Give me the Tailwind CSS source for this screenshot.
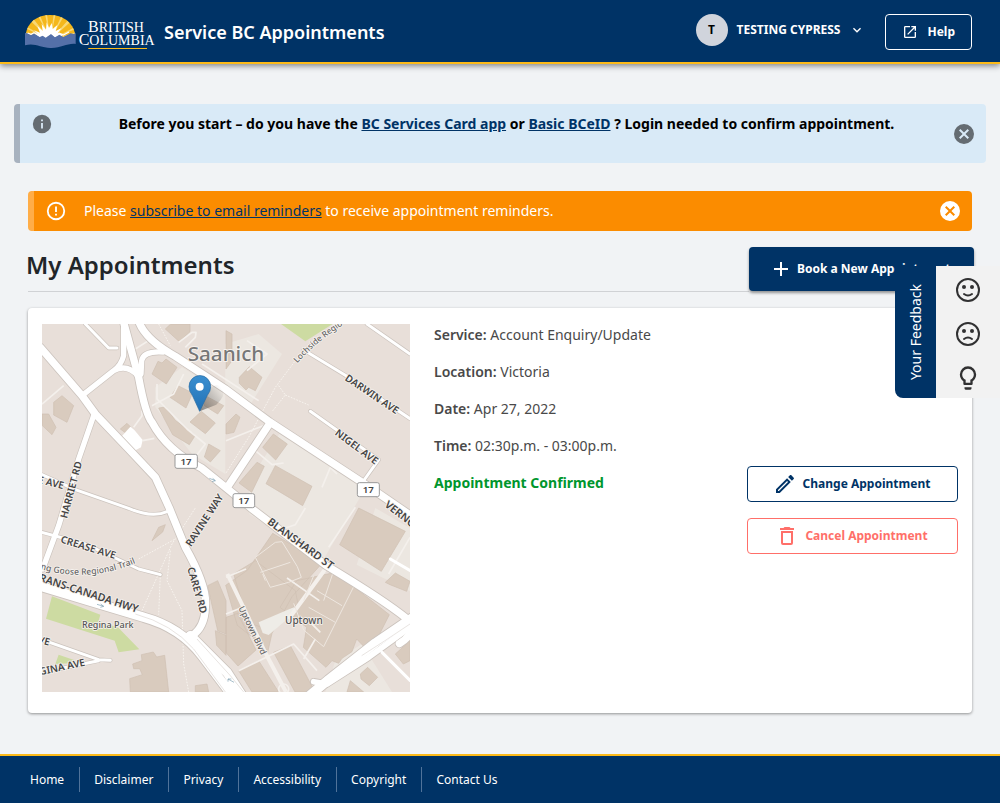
<!DOCTYPE html>
<html lang="en">
<head>
<meta charset="utf-8">
<meta name="viewport" content="width=device-width, initial-scale=1">
<title>Service BC Appointments</title>
<script src="https://cdn.jsdelivr.net/npm/@tailwindcss/browser@4"></script>
</head>
<body class="flex min-h-screen flex-col bg-[#f1f3f5] font-['Noto_Sans',sans-serif] text-sm text-[#494949]">

<header class="relative flex h-16 items-center border-b-2 border-[#fcba19] bg-[#003366] pt-0.5 pr-7 pl-[25px] text-white shadow-[0_2px_6px_rgba(0,0,0,0.45)]">
  <a href="#" class="flex items-center gap-2" aria-label="British Columbia">
    <svg class="h-9 w-[131px] overflow-visible" viewBox="0 0 393 108" aria-hidden="true">
      <clipPath id="dome"><path d="M2 62C7 24 37 3 75 3s69 21 76 59v34H2z"/></clipPath>
      <g clip-path="url(#dome)">
        <path fill="#f4b71c" d="M0 0h156v70H0z"/>
        <path fill="#f9d873" d="M76 78 0 42v-7zM76 78 10 14l8-8zM76 78 36 0h7zM76 78 60 0h6zM76 78 86 0h6zM76 78 112 0h8zM76 78 138 8l7 8zM76 78 156 36v7zM76 78 0 60v-5zM76 78 156 54v5z"/>
        <path fill="#fff" d="m22 62 17-1-12-12 18 7-8-20 16 15-3-21 13 17 2-22 7 17 8-15 3 18 14-12-5 18 17-8-11 15 17 2-8 12H30z"/>
      </g>
      <path fill="#5470a8" d="M0 57 10 58l8 5 9-5 17 11 9-4 9 6 16-11 12 10 13-8 12 7 22-11 9 2 6-3v33c-26-3-42 13-76 12-30-1-46-16-76-8z"/>
      <path fill="none" stroke="#fff" stroke-width="4" d="m8 57 10 4 9-5 17 9 10-4 9 5 15-10 12 10 13-8 12 5 17-9"/>
      <g fill="#fff" font-family="Liberation Serif, serif">
        <text x="189" y="54" font-size="48">B<tspan font-size="42">RITISH</tspan></text>
        <text x="161" y="93" font-size="48">C<tspan font-size="42">OLUMBIA</tspan></text>
      </g>
      <path fill="#fcba19" d="M190 102h176v3H190z"/>
    </svg>
    <span class="text-lg font-semibold whitespace-nowrap">Service BC Appointments</span>
  </a>
  <div class="ml-auto flex items-center gap-5">
    <button type="button" class="flex items-center gap-[9px] pb-1 text-xs font-bold whitespace-nowrap">
      <span class="flex size-8 items-center justify-center rounded-full bg-[#d0d4dc] text-black">T</span>
      <span>TESTING CYPRESS</span>
      <svg class="size-4" viewBox="0 0 24 24" fill="currentColor" aria-hidden="true"><path d="M7.41 8.58 12 13.17l4.59-4.59L18 10l-6 6-6-6z"/></svg>
    </button>
    <button type="button" class="flex h-9 items-center gap-[9px] rounded border border-white px-4 text-xs font-bold">
      <svg class="size-4" viewBox="0 0 24 24" fill="currentColor" aria-hidden="true"><path d="M14 3v2h3.59l-9.83 9.83 1.41 1.41L19 6.41V10h2V3M19 19H5V5h7V3H5c-1.11 0-2 .9-2 2v14a2 2 0 0 0 2 2h14a2 2 0 0 0 2-2v-7h-2z"/></svg>
      <span>Help</span>
    </button>
  </div>
</header>

<main class="flex-1 px-7 pt-10 pb-10">
  <section role="status" class="-mx-3.5 flex h-[59px] items-start rounded border-l-6 border-[#a8b2bf] bg-[#d9eaf7] pr-2.5 text-black">
    <svg class="mt-[9px] ml-[11px] size-[22px] shrink-0 text-[#656c72]" viewBox="0 0 24 24" fill="currentColor" aria-hidden="true"><path d="M13 9h-2V7h2m0 10h-2v-6h2M12 2a10 10 0 1 0 0 20 10 10 0 0 0 0-20z"/></svg>
    <p class="mt-2.5 flex-1 pl-2 text-center font-bold">Before you start – do you have the <a href="#" class="text-[#003366] underline">BC Services Card app</a> or <a href="#" class="text-[#003366] underline">Basic BCeID</a> ? Login needed to confirm appointment.</p>
    <button type="button" aria-label="Close notice" class="self-center text-[#656c72]"><svg class="size-6" viewBox="0 0 24 24" fill="currentColor" fill-rule="evenodd" aria-hidden="true"><path d="M12 2a10 10 0 1 0 0 20 10 10 0 0 0 0-20m3.59 5L12 10.59 8.41 7 7 8.41 10.59 12 7 15.59 8.41 17 12 13.41 15.59 17 17 15.59 13.41 12 17 8.41z"/></svg></button>
  </section>

  <section role="status" class="mt-7 flex h-10 items-center rounded border-l-6 border-[#ffad47] bg-[#fb8c00] pr-2.5 pl-[11px] text-white">
    <svg class="size-[22px] shrink-0" viewBox="0 0 24 24" fill="currentColor" aria-hidden="true"><path d="M11 15h2v2h-2zm0-8h2v6h-2zm1-5a10 10 0 1 0 0 20 10 10 0 0 0 0-20m0 18a8 8 0 1 1 0-16 8 8 0 0 1 0 16z"/></svg>
    <p class="ml-[17px] flex-1">Please <a href="#" class="text-[#003366] underline">subscribe to email reminders</a> to receive appointment reminders.</p>
    <button type="button" aria-label="Close reminder"><svg class="size-6" viewBox="0 0 24 24" fill="currentColor" fill-rule="evenodd" aria-hidden="true"><path d="M12 2a10 10 0 1 0 0 20 10 10 0 0 0 0-20m3.59 5L12 10.59 8.41 7 7 8.41 10.59 12 7 15.59 8.41 17 12 13.41 15.59 17 17 15.59 13.41 12 17 8.41z"/></svg></button>
  </section>

  <div class="mt-4 -mr-0.5 flex items-start justify-between">
    <div class="flex h-[45px] flex-1 border-b border-[#d0d2d5]"><h1 class="-ml-0.5 text-2xl/9 font-semibold text-[#212529]">My Appointments</h1></div>
    <button type="button" class="flex h-11 w-[225px] items-center gap-1 rounded bg-[#003366] pl-5 text-xs font-bold whitespace-nowrap text-white shadow-[0_2px_3px_rgba(0,0,0,0.4)]">
      <svg class="size-6 shrink-0" viewBox="0 0 24 24" fill="currentColor" aria-hidden="true"><path d="M19 13h-6v6h-2v-6H5v-2h6V5h2v6h6z"/></svg>
      <span>Book a New Appointment</span>
    </button>
  </div>

  <article class="mt-4 flex gap-6 rounded bg-white px-3.5 pt-4 pb-[21px] shadow-[0_1px_3px_rgba(0,0,0,0.4)]">
    <svg class="size-[368px] shrink-0" viewBox="0 0 1104 1104" role="img" aria-label="Map of the Victoria office" font-family="Noto Sans, sans-serif">
      <path fill="#e8dfd9" d="M0 0h1104v1104H0z"/>
      <g fill="#ece7e1">
        <path d="M340 190 420 130l130 80v240l-100-60-110-140zM622 470l90-140 260 160-130 220-220-140zM1000 552l104 60v190l-160-80zM550 60 650 30l70 60-100 160-70-40zM880 1010l80-50 90 144H850z"/>
      </g>
      <g fill="#cddba2">
        <path d="M717 0h155l-82 52zM30 817l145 55-5 18 60 22 62 64-62 9-12-35-206-66zM50 992l46 16-12 10-44 2z"/>
      </g>
      <g fill="#d9cbbe" stroke="#cfc0b2" stroke-width="2">
        <path d="m386 0-16 15 42 38 32-30V0zM330 150l18-38 12 5 12-12 33 25-32 50zM408 185l44 22-20 45-48-32zM478 262l42 35-30 32-46-35zM350 252l20-3 30 40 60 45-18 28-50-30zM500 360l35 20-30 34-18-15zM490 215l55 30-18 25-40-25zM235 315l20-17 10 10-10 22zM35 235l25-20 35 30-20 50-40-22zM0 270l20 0 22 40-12 22-30-28zM592 160l30-32 38 32-20 40-20-10-8 8-20-20zM552 20l18 10v80l-18 25zM552 300l30-30 12 10-18 45-24 5zM662 370l32-40 42 30-35 48zM645 415l22 12-38 78-38-28zM700 425l110 62-28 58-110-66zM1020 530l84 40v-10l-60-35z"/>
        <path d="m950 552 140 70-72 120-125-80zM1030 775l30-28 44 25-10 30-50-20zM692 628l148 90-90 100-60 110-16 70-38-54-50-40-35-120 65-45zM575 750l65-40 120 90 8 40-110 70-40-15zM880 745l162 127-58 115-40-42-14 38-30 20-10 15-20-8-18 20-68-60 10-60-80-60 50-80zM552 880l35-12 55 110-54 48-36-40zM590 1040l60-30 60 94h-80zM695 985l50-20 74 139h-60zM330 650l20-40 20-8-8 22zM497 785l30-15 25 60v100l-25-10zM520 920l32 14v60l-28-30zM272 1020l28-10-2-18 36-8 10 15 24-5 12 110H265l-2-40 38-12-8-18-18 0zM460 1085l35-5 5 24h-40zM955 1050l22-20 30 30-25 25-25-20zM1060 990l44-40v60l-20 10zM925 1070l40 34h-50z"/>
      </g>
      <path fill="#eeece7" d="m650 895 105-45 5 15-80 68-18-6z"/>
      <path fill="#fff" d="m240 336 25-28 12 10 25 30-5 22-22 12-15-16z"/>
      <g fill="none" stroke="#f4f0ec" stroke-width="5" stroke-linejoin="round">
        <path d="m410 55 40-30 12 0-2 15-30 30M345 180v45l90 90 55 45-50 65M330 245l65-35 30-60M275 310l25-35V260M302 350l35-7M0 240l65-55M280 75l55-35M480 120 650 230M552 350l150-60M615 50l60 40-60 50M640 380l50 42 35-5M840 490l25-60 20 20M1104 640 1040 750M940 550 860 670M790 552l-30 50-60 20M552 760l60-25M552 870l50-20M735 762 832 830M790 880l45 45M590 1040l165-80 70 80M785 1005l35-60"/>
        <path d="m556 750 116 240 60 114M740 885l110-150" stroke-width="12"/>
        <circle cx="725" cy="1095" r="15"/>
      </g>
      <g fill="none" stroke="#eee7e0" stroke-width="3">
        <path d="m700 655-60 45 45 90 55-15 38-15-12-32-46-75zM655 745l90-30M670 770l-8-20M815 755l-30 75M845 830l30-90 65 38-95 190-60-50-30-80M800 850l80 45M825 800l75 45"/>
      </g>
      <g fill="none" stroke="#f8f4ef" stroke-width="3" stroke-dasharray="5 4">
        <path d="m350 0 35 65M790 70 700 190l-80 150-70 110M710 185l20 28-40 50M730 213l70 30M300 860l90-200 70-108M355 752l-5 120M385 680l-10 90 45 90 5 160 15 84M290 705l110-60"/>
      </g>
      <g fill="none" stroke="#cbc3bd" stroke-linejoin="round" stroke-linecap="round">
        <path stroke-width="13" d="m130 0 70 72h25M0 452l100 45 160 56q70 30 115 10M0 625l130 35 160 75 65 17M0 947l170 60 35 2M0 1045l170-35M785 78l125 76 194 130M975 0l129 90M805 262l205 145-50 70"/>
        <path stroke-width="20" d="M245 0v95q-8 30-30 45l-95 75M215 140q40-22 72 15M297 150l2-40q5-30 65-26M155 275l-45 130-60 200-48 130"/>
        <path stroke-width="27" d="m-5 70 125 145 40 55 100 105 80 85 42 92 48 118q68 120 60 180-2 60-40 85M245-5l45 165q20 110 40 135 45 85 150 138l72 58 80 65 220 168q200 120 260 175 0 35-40 60M290-8q20 55 110 105l150 98 132 98 298 195 124 85M682 300 556 490"/>
        <path stroke-width="33" d="m-10 785 150 45 165 50q110 30 175 115l90 119M445 935l110 110 45 70M1110 882l-110 75-140 110-60 50"/>
        <path stroke-width="22" d="M1110 905l-130 95-125 80-40-7"/>
      </g>
      <g fill="none" stroke="#fff" stroke-linejoin="round" stroke-linecap="round">
        <path stroke-width="9" d="m130 0 70 72h25M0 452l100 45 160 56q70 30 115 10M0 625l130 35 160 75 65 17M0 947l170 60 35 2M0 1045l170-35M785 78l125 76 194 130M975 0l129 90M805 262l205 145-50 70M1045 705l60 35M1020 985l84 84"/>
        <path stroke-width="16" d="M245 0v95q-8 30-30 45l-95 75M215 140q40-22 72 15M297 150l2-40q5-30 65-26M155 275l-45 130-60 200-48 130"/>
        <path stroke-width="22" d="m-5 70 125 145 40 55 100 105 80 85 42 92 48 118q68 120 60 180-2 60-40 85M245-5l45 165q20 110 40 135 45 85 150 138l72 58 80 65 220 168q200 120 260 175 0 35-40 60M290-8q20 55 110 105l150 98 132 98 298 195 124 85M682 300 556 490"/>
        <path stroke-width="28" d="m-10 785 150 45 165 50q110 30 175 115l90 119M445 935l110 110 45 70M1110 882l-110 75-140 110-60 50"/>
        <path stroke-width="17" d="M1110 905l-130 95-125 80-40-7"/>
      </g>
      <path fill="none" stroke="#ddd7d2" stroke-width="2" d="M280 870q110 30 175 105l95 129M465 945l100 110 40 49M1104 900l-75 50-70 45"/>
      <g fill="#444" stroke="#f6f2ee" stroke-width="5" paint-order="stroke" stroke-linejoin="round" font-size="30" font-weight="600">
        <path id="lochside" fill="none" stroke="none" d="M766 118Q830 45 930-14"/>
        <path id="goose" fill="none" stroke="none" d="M-42 722Q130 790 306 706"/>
        <text font-size="62" x="437" y="111" fill="#777" stroke-width="6" font-weight="500">Saanich</text>
        <text font-size="25" fill="#666" font-weight="500"><textPath href="#lochside">Lochside Regio</textPath></text>
        <text transform="translate(907 167) rotate(34)">DARWIN AVE</text>
        <text transform="translate(877 331) rotate(37)">NIGEL AVE</text>
        <text transform="translate(75 585) rotate(-75)">HARRIET RD</text>
        <text transform="translate(-14 476) rotate(14)">E AVE</text>
        <text transform="translate(447 670) rotate(-57)">RAVINE WAY</text>
        <text transform="translate(674 598) rotate(36)" font-size="32">BLANSHARD ST</text>
        <text transform="translate(1026 546) rotate(38)" font-size="32">VERNON</text>
        <text transform="translate(54 655) rotate(17)">CREASE AVE</text>
        <text font-size="26" fill="#666" font-weight="500"><textPath href="#goose">oping Goose Regional Trail</textPath></text>
        <text transform="translate(-28 765) rotate(18)" font-size="32">TRANS-CANADA HWY</text>
        <text transform="translate(436 733) rotate(74)">CAREY RD</text>
        <text x="120" y="912" font-size="27" fill="#555" font-weight="500">Regina Park</text>
        <text transform="translate(-14 956) rotate(15)">VE</text>
        <text transform="translate(-22 1057) rotate(-12)">EGINA AVE</text>
        <text transform="translate(589 852) rotate(64)" font-size="26" fill="#666" font-weight="500">Uptown Blvd</text>
        <text x="729" y="901" font-size="30" fill="#555" font-weight="500">Uptown</text>
      </g>
      <g fill="#fff" stroke="#999" stroke-width="3">
        <rect x="399" y="391" width="67" height="42" rx="6"/><rect x="573" y="509" width="65" height="42" rx="6"/><rect x="946" y="476" width="66" height="42" rx="6"/>
      </g>
      <g fill="#444" font-size="29" font-weight="600" text-anchor="middle"><text x="432" y="423">17</text><text x="605" y="541">17</text><text x="979" y="508">17</text></g>
      <g fill="none" stroke="#7b9fb0" stroke-width="2"><path d="m502 463 18 7m-8-7 8 7-10 3M165 841l20 6m-9-7 9 7-10 3M558 1065l18 10m-18-2v-8h10"/></g>
      <defs>
        <linearGradient id="pin" x2="0" y2="1"><stop stop-color="#3b8fd0"/><stop offset="1" stop-color="#2171b5"/></linearGradient>
        <linearGradient id="shade" gradientUnits="userSpaceOnUse" x1="473" y1="262" x2="548" y2="205"><stop stop-color="#333" stop-opacity=".55"/><stop offset="1" stop-color="#333" stop-opacity="0"/></linearGradient>
      </defs>
      <path fill="url(#shade)" d="m473 262 20-60q30-30 50-12 10 25-20 52z"/>
      <path fill="url(#pin)" stroke="#2669a1" stroke-width="2" d="M473 262 451 214q-10-12-10-26a32 33 0 0 1 65 0q0 14-10 26z"/>
      <circle cx="473" cy="188" r="12" fill="#fff"/>
    </svg>

    <div class="flex-1 space-y-4 leading-[21px]">
      <p><b class="font-semibold">Service:</b> Account Enquiry/Update</p>
      <p><b class="font-semibold">Location:</b> Victoria</p>
      <p><b class="font-semibold">Date:</b> Apr 27, 2022</p>
      <p><b class="font-semibold">Time:</b> 02:30p.m. - 03:00p.m.</p>
      <p class="font-bold text-[#00962d]">Appointment Confirmed</p>
    </div>

    <div class="flex w-[211px] flex-col gap-4 pt-[142px] text-xs font-bold">
      <button type="button" class="flex h-9 items-center justify-center gap-1.5 rounded border border-[#003366] pr-0.5 text-[#003366]">
        <svg class="size-6" viewBox="0 0 24 24" fill="currentColor" aria-hidden="true"><path d="m14.060 9 .94.94L5.920 19H5v-.92zm3.600-6c-.25 0-.51.1-.7.29l-1.830 1.830 3.750 3.750 1.830-1.830c.39-.39.39-1.040 0-1.410l-2.340-2.340c-.2-.2-.45-.29-.71-.29m-3.600 3.190L3 17.250V21h3.750L17.810 9.940z"/></svg>
        <span>Change Appointment</span>
      </button>
      <button type="button" class="flex h-9 items-center justify-center gap-1.5 rounded border border-[#ff6f69] pr-0.5 text-[#ff6f69]">
        <svg class="size-6" viewBox="0 0 24 24" fill="currentColor" aria-hidden="true"><path d="M6 19a2 2 0 0 0 2 2h8a2 2 0 0 0 2-2V7H6zM8 9h8v10H8zm7.500-5-1-1h-5l-1 1H5v2h14V4z" fill-rule="evenodd"/></svg>
        <span>Cancel Appointment</span>
      </button>
    </div>
  </article>
</main>

<aside class="fixed top-[266px] right-0 flex h-[132px]" aria-label="Feedback">
  <button type="button" class="flex w-[41px] items-center justify-center rounded-bl-lg bg-[#003366] text-white"><span class="rotate-180 [writing-mode:vertical-rl]">Your Feedback</span></button>
  <div class="flex w-16 flex-col items-center gap-4 bg-[#f2f2f2] pt-2.5 text-[#313132]">
    <button type="button" aria-label="Compliment" class="h-7"><svg class="size-7" viewBox="0 0 28 28" aria-hidden="true"><circle cx="14" cy="14" r="11" fill="none" stroke="currentColor" stroke-width="2"/><circle cx="10" cy="11" r="2" fill="currentColor"/><circle cx="18" cy="11" r="2" fill="currentColor"/><path d="M10 18q4 3 8 0" fill="none" stroke="currentColor" stroke-width="2" stroke-linecap="round"/></svg></button>
    <button type="button" aria-label="Complaint" class="h-7"><svg class="size-7" viewBox="0 0 28 28" aria-hidden="true"><circle cx="14" cy="14" r="11" fill="none" stroke="currentColor" stroke-width="2"/><circle cx="10" cy="11" r="2" fill="currentColor"/><circle cx="18" cy="11" r="2" fill="currentColor"/><path d="M10 19q4-3 8 0" fill="none" stroke="currentColor" stroke-width="2" stroke-linecap="round"/></svg></button>
    <button type="button" aria-label="Suggestion" class="h-7"><svg class="size-7" viewBox="0 0 24 24" fill="currentColor" aria-hidden="true"><path d="M12 2a7 7 0 0 1 7 7c0 2.380-1.190 4.470-3 5.740V17a1 1 0 0 1-1 1H9a1 1 0 0 1-1-1v-2.260C6.190 13.470 5 11.380 5 9a7 7 0 0 1 7-7M9 21v-1h6v1a1 1 0 0 1-1 1h-4a1 1 0 0 1-1-1m3-17a5 5 0 0 0-5 5c0 2.050 1.230 3.810 3 4.580V16h4v-2.420c1.770-.77 3-2.530 3-4.580a5 5 0 0 0-5-5z"/></svg></button>
  </div>
</aside>

<footer class="border-t-2 border-[#fcba19] bg-[#003366] px-4 py-[11px] text-xs text-white">
  <nav class="flex divide-x divide-[#50739a]">
    <a href="#" class="pr-[15px] pl-3.5 leading-[25px]">Home</a>
    <a href="#" class="pr-[15px] pl-3.5 leading-[25px]">Disclaimer</a>
    <a href="#" class="pr-[15px] pl-3.5 leading-[25px]">Privacy</a>
    <a href="#" class="pr-[15px] pl-3.5 leading-[25px]">Accessibility</a>
    <a href="#" class="pr-[15px] pl-3.5 leading-[25px]">Copyright</a>
    <a href="#" class="px-3.5 leading-[25px]">Contact Us</a>
  </nav>
</footer>
</body>
</html>
